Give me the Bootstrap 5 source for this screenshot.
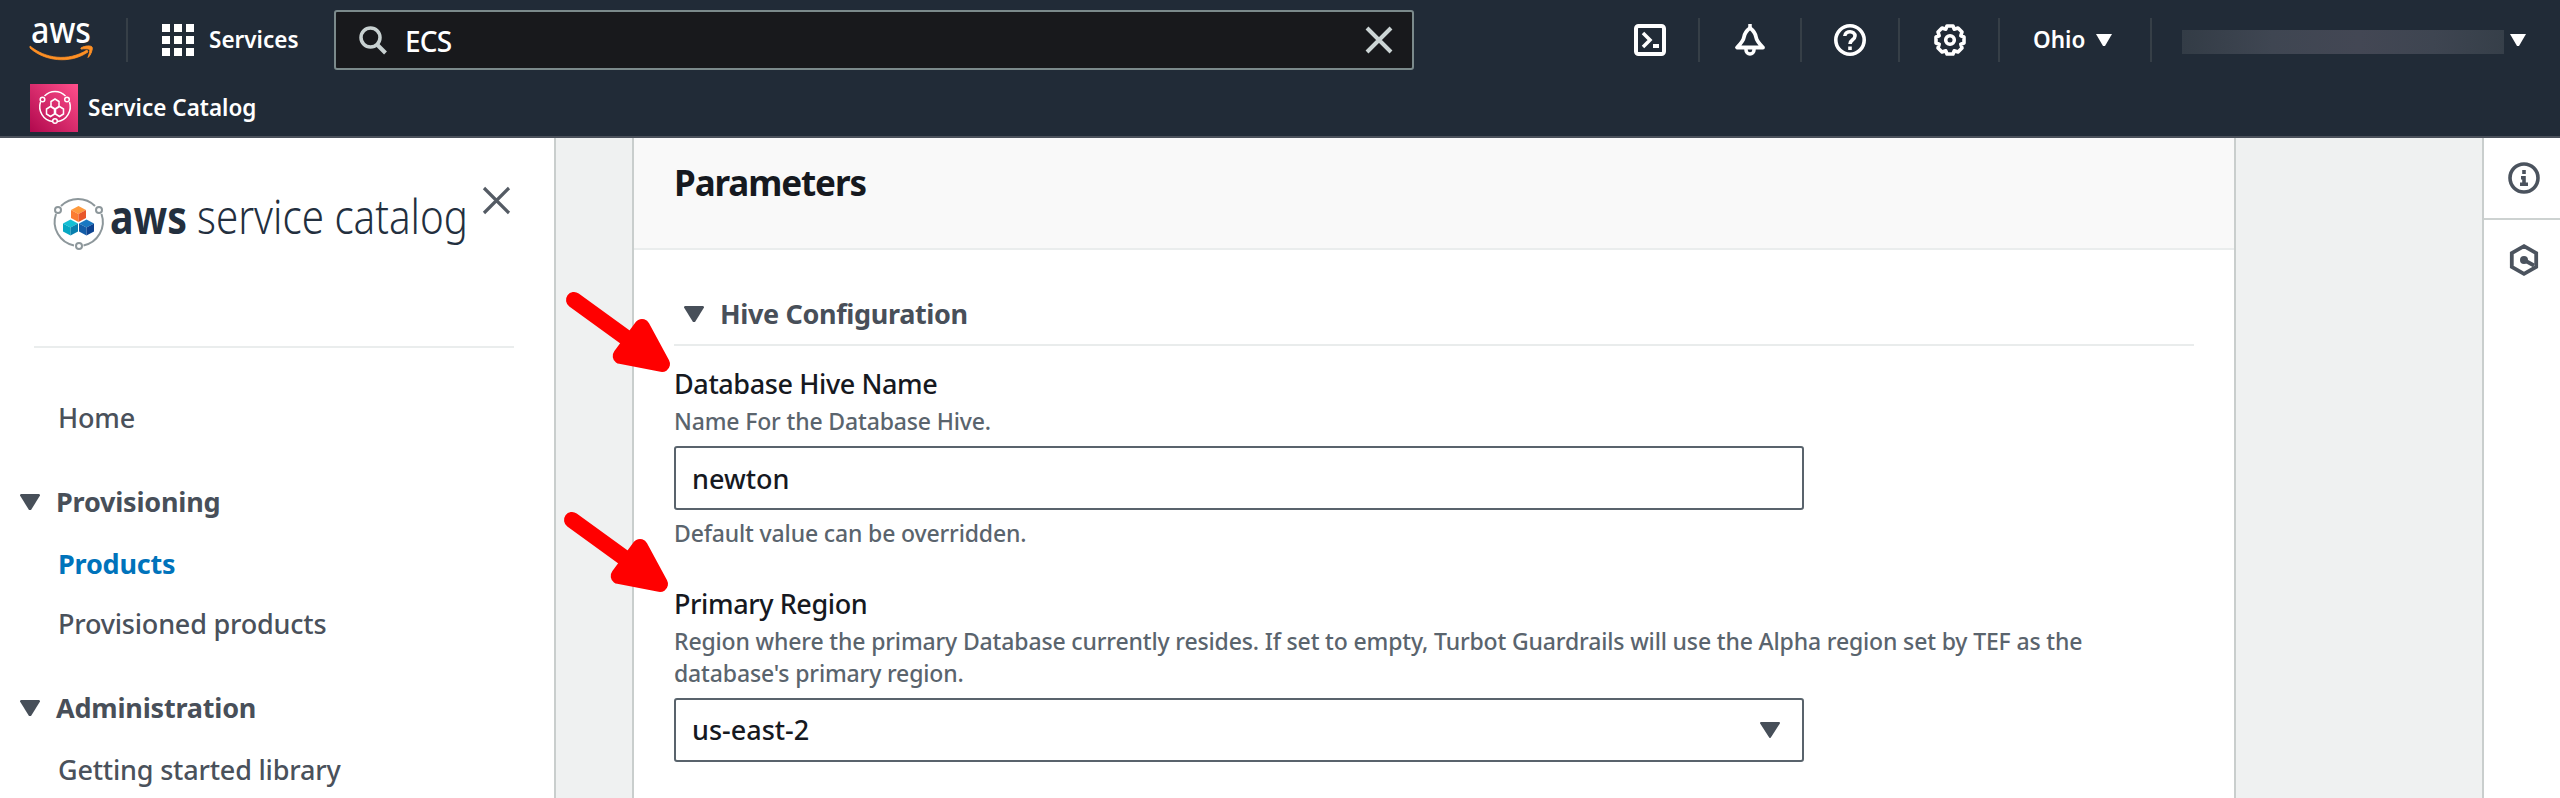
<!DOCTYPE html>
<html lang="en">
<head>
<meta charset="utf-8">
<meta name="viewport" content="width=device-width, initial-scale=1">
<title>Service Catalog</title>
<link href="https://cdn.jsdelivr.net/npm/bootstrap@5.3.0/dist/css/bootstrap.min.css" rel="stylesheet">
<style>
body{font-family:"Noto Sans","Open Sans",sans-serif;font-size:27px;font-weight:500;letter-spacing:-.2px;line-height:36px;color:#16191f;background:#fff}
svg{display:block;flex:none;overflow:visible}
.shell{height:798px}
.topbar{height:138px;background:#212b37;border-bottom:2px solid #4b515b;color:#fff}
.toprow{height:80px}
.vline{width:2px;height:44px;background:#363f47}
.topbar-text{font-size:22.5px;font-weight:600;letter-spacing:0;line-height:30px}
.search{width:1080px;height:60px;background:#18191c;border:2px solid #7b8a8b;border-radius:3px;padding:0 19px 0 22px}
.search input{font-size:28px;font-weight:550;letter-spacing:-.8px;padding:2px 0 0;color:#fff!important;margin-left:17px}
.slot{width:100px}
.redacted{width:322px;height:24px;background:linear-gradient(90deg,#333c46,#3f4652 28%,#434754 55%,#3e4551 78%,#363f49)}
.side{width:556px;border-right:2px solid #c9cecd;color:#4a515b}
.side a{color:inherit;text-decoration:none;display:block;padding-left:58px}
.side .current{color:#0073bb;font-weight:700}
.side-rule{height:2px;background:#eaeded;margin:0 40px 0 34px}
.group-title{font-weight:700;color:#484f59}
.canvas{background:#eff1f1;padding-left:76px}
.panel{width:1604px;background:#fff;border:solid #c9cecd;border-width:0 2px}
.panel-top{height:112px;background:#f9f9f9;border-bottom:2px solid #eaeded;padding:21px 40px 0 40px}
.panel-top h1{font-size:35px;font-weight:700;line-height:48px;letter-spacing:-1.1px;margin:0}
.panel-main{padding:46px 40px 0 40px}
.section-title{padding:0 0 12px 10px;border-bottom:2px solid #e9ecec;margin-bottom:22px;gap:16px;letter-spacing:-.35px}
.field-label{line-height:32px;letter-spacing:-.4px;margin:0 0 5px;display:block}
.hint{font-size:23px;font-weight:530;line-height:32px;letter-spacing:-.15px;color:#5a646d;margin:0}
.field{width:1130px;height:64px;border:2px solid #59636c!important;border-radius:3px;padding:1px 16px 0;margin:9px 0 7px;font-size:27px;font-weight:500;letter-spacing:0;color:#16191f;background-color:#fff}
select.field{padding-top:0;background:#fff url("data:image/svg+xml,%3Csvg xmlns='http://www.w3.org/2000/svg' viewBox='0 0 20 16'%3E%3Cpath fill='%23474f59' stroke='%23474f59' stroke-width='2' stroke-linejoin='round' d='M1 1h18L10 15z'/%3E%3C/svg%3E") no-repeat right 22px center/20px 16px}
.tools{width:78px;border-left:2px solid #c9cecd}
.tool{height:82px;border-bottom:2px solid #cdd2d1}
.pointer{position:absolute;left:560px;width:120px;height:90px}
</style>
</head>
<body class="overflow-hidden">
<div class="shell d-flex flex-column position-relative">
<header class="topbar flex-shrink-0">
  <div class="toprow d-flex align-items-center">
    <svg width="66" height="44" viewBox="0 0 66 44" style="margin-left:29px">
      <text x="2" y="25" font-size="37" font-weight="550" letter-spacing="0" textLength="60" lengthAdjust="spacingAndGlyphs" fill="#fff">aws</text>
      <path d="M1 28c15 12.500 38 16 57 4l1 2C41 46.500 15 43 1 30z" fill="#ff9024" stroke="#ff9024" stroke-width=".8"/><path d="M52 30c4-2.500 10-2.500 11-1s-1 8-4 10.500c1-3 2.500-7 1.500-8s-5-.8-8.500-.5z" fill="#ff9024" stroke="#ff9024"/>
    </svg>
    <div class="vline" style="margin-left:31px"></div>
    <svg width="32" height="32" viewBox="0 0 32 32" fill="#fff" style="margin-left:34px"><path d="M0 0h8v8H0zM12 0h8v8h-8zM24 0h8v8h-8zM0 12h8v8H0zM12 12h8v8h-8zM24 12h8v8h-8zM0 24h8v8H0zM12 24h8v8h-8zM24 24h8v8h-8z"/></svg>
    <span class="topbar-text" style="margin-left:15px;width:125px">Services</span>
    <div class="search d-flex align-items-center">
      <svg width="30" height="30" viewBox="0 0 30 30" fill="none" stroke="#c8d1d1" stroke-width="3.500"><circle cx="12.500" cy="12.500" r="9.500"/><path d="M19 19.500l8.500 8.500" stroke-width="4"/></svg>
      <input class="form-control border-0 bg-transparent shadow-none" value="ECS" aria-label="Search">
      <svg width="28" height="28" viewBox="0 0 28 28" stroke="#ccd5d5" stroke-width="4"><path d="M2 2l24 24M26 2L2 26"/></svg>
    </div>
    <div class="d-flex align-items-center" style="margin-left:186px">
      <div class="slot d-flex justify-content-center"><svg width="32" height="32" viewBox="0 0 32 32" fill="none" stroke="#fff" stroke-width="4"><rect x="2" y="2" width="28" height="28" rx="2.500"/><path d="M9 9l7 7-7 7" stroke-width="3.500"/><path d="M19 22h6"/></svg></div>
      <div class="vline" style="margin-left:-2px"></div>
      <div class="slot d-flex justify-content-center"><svg width="32" height="32" viewBox="0 0 32 32" fill="none" stroke="#fff" stroke-width="3.800" stroke-linejoin="round"><path d="M16 4c-4 3-5.500 6-6 9-.6 4-3.500 7-7 10.500h26c-3.500-3.500-6.400-6.500-7-10.500-.5-3-2-6-6-9z"/><path d="M12 24v2a4 4 0 0 0 8 0v-2M16 0v5" stroke-width="3.500"/></svg></div>
      <div class="vline"></div>
      <div class="slot d-flex justify-content-center" style="margin-left:-2px"><svg width="32" height="32" viewBox="0 0 32 32" fill="none" stroke="#fff" stroke-width="3.600"><circle cx="16" cy="16" r="14.200"/><path d="M10.800 12c.4-6 10.400-5.500 10.200 0-.1 4-5 3.500-5 8M16 22.500v3.500"/></svg></div>
      <div class="vline" style="margin-left:-2px"></div>
      <div class="slot d-flex justify-content-center"><svg width="32" height="32" viewBox="0 0 32 32" fill="none" stroke="#fff" stroke-width="3.600" stroke-linejoin="round"><path d="M13 2h6l1.200 3.200L24 4l4 4-1.200 3.800L30 13v6l-3.200 1.200L28 24l-4 4-3.800-1.200L19 30h-6l-1.200-3.200L8 28l-4-4 1.200-3.800L2 19v-6l3.200-1.200L4 8l4-4 3.800 1.200z"/><circle cx="16" cy="16" r="4.300"/></svg></div>
      <div class="vline" style="margin-left:-2px"></div>
    </div>
    <span class="topbar-text" style="margin-left:33px">Ohio</span>
    <svg width="16" height="12" viewBox="0 0 16 12" fill="#fff" style="margin-left:11px"><path d="M0 0h16L9 12H7z"/></svg>
    <div class="vline ms-auto"></div>
    <div class="redacted" style="margin:4px 6px 0 30px"></div>
    <svg width="16" height="12" viewBox="0 0 16 12" fill="#fff" style="margin-right:34px"><path d="M0 0h16L9 12H7z"/></svg>
  </div>
  <div class="d-flex align-items-center" style="padding:4px 0 0 30px">
    <svg width="48" height="48" viewBox="0 0 48 48">
      <defs><linearGradient id="pink" x1="0" y1="1" x2="1" y2="0"><stop offset="0" stop-color="#b0084d"/><stop offset="1" stop-color="#ff4f8b"/></linearGradient></defs>
      <path fill="url(#pink)" d="M0 0h48v48H0z"/>
      <g fill="none" stroke="#fff" stroke-width="1.500"><path d="M14.500 12a14.500 14.500 0 0 1 21 0M39.500 18a15 15 0 0 1-12 19.500M10.500 18a15 15 0 0 0 12 19.500"/><circle cx="12.500" cy="15.500" r="2.300"/><circle cx="37" cy="15.500" r="2.300"/><circle cx="25" cy="37" r="2.300"/><path d="M25 15l4 2.500v5L25 25l-4-2.500v-5zM20.500 22.500l4 2.500v5l-4 2.500-4-2.500v-5zM29.500 22.500l4 2.500v5l-4 2.500-4-2.500v-5z"/></g>
    </svg>
    <span class="topbar-text" style="margin-left:10px">Service Catalog</span>
  </div>
</header>
<div class="d-flex flex-grow-1 overflow-hidden">
  <nav class="side flex-shrink-0">
    <div class="d-flex align-items-start" style="padding:46px 42px 0 53px;height:208px">
      <svg width="416" height="74" viewBox="53 184 416 74" style="margin-right:12px">
        <g fill="none" stroke="#8d979b" stroke-width="2"><path d="M61 206a24 24 0 0 1 34 0M101.500 214a24 24 0 0 1-18 31.500M56 214a24 24 0 0 0 18 31.500"/><circle cx="58" cy="210" r="3"/><circle cx="99" cy="210" r="3"/><circle cx="79" cy="246" r="3"/></g>
        <path d="M78.500 206l7.500 4-7.500 4-7.500-4z" fill="#ff9a3d"/><path d="M71 210l7.500 4v8l-7.500-4z" fill="#fb7c31"/><path d="M86 210l-7.500 4v8l7.500-4z" fill="#e8572a"/>
        <path d="M70.500 219.500l7.500 4-7.500 4-7.500-4z" fill="#14bfd4"/><path d="M63 223.500l7.500 4v8l-7.500-4z" fill="#06a7c2"/><path d="M78 223.500l-7.500 4v8l7.500-4z" fill="#087fae"/>
        <path d="M86.500 219.500l7.500 4-7.500 4-7.500-4z" fill="#1878c2"/><path d="M79 223.500l7.500 4v8l-7.500-4z" fill="#135da8"/><path d="M94 223.500l-7.500 4v8l7.500-4z" fill="#0d4390"/>
        <text x="110" y="234" font-size="47" font-weight="700" letter-spacing="0" textLength="77" lengthAdjust="spacingAndGlyphs" fill="#232f3e">aws</text>
        <text x="197" y="234" font-size="47" font-weight="300" letter-spacing="0" textLength="271" lengthAdjust="spacingAndGlyphs" fill="#232f3e">service catalog</text>
      </svg>
      <svg width="30" height="30" viewBox="0 0 30 30" stroke="#545b64" stroke-width="3.200" style="margin-top:1px"><path d="M3 3l25 25M28 3L3 28"/></svg>
    </div>
    <div class="side-rule"></div>
    <a href="#" style="margin-top:52px">Home</a>
    <div class="group-title d-flex align-items-center" style="margin:48px 0 26px 20px;gap:16px"><svg width="20" height="16" viewBox="0 0 20 16" fill="#474f59"><path d="M1 0h18q1 0 1 1.500L11 16H9L0 1.500Q0 0 1 0z"/></svg>Provisioning</div>
    <a href="#" class="current">Products</a>
    <a href="#" style="margin-top:24px">Provisioned products</a>
    <div class="group-title d-flex align-items-center" style="margin:48px 0 26px 20px;gap:16px"><svg width="20" height="16" viewBox="0 0 20 16" fill="#474f59"><path d="M1 0h18q1 0 1 1.500L11 16H9L0 1.500Q0 0 1 0z"/></svg>Administration</div>
    <a href="#">Getting started library</a>
  </nav>
  <main class="canvas flex-grow-1 d-flex">
    <section class="panel">
      <div class="panel-top"><h1>Parameters</h1></div>
      <div class="panel-main">
        <div class="section-title group-title d-flex align-items-center"><svg width="20" height="16" viewBox="0 0 20 16" fill="#474f59"><path d="M1 0h18q1 0 1 1.500L11 16H9L0 1.500Q0 0 1 0z"/></svg>Hive Configuration</div>
        <label class="field-label" for="hive">Database Hive Name</label>
        <p class="hint">Name For the Database Hive.</p>
        <input id="hive" class="form-control field" value="newton">
        <p class="hint">Default value can be overridden.</p>
        <label class="field-label" for="region" style="margin-top:39px">Primary Region</label>
        <p class="hint">Region where the primary Database currently resides. If set to empty, Turbot Guardrails will use the Alpha region set by TEF as the<br>database's primary region.</p>
        <select id="region" class="form-select field"><option>us-east-2</option></select>
      </div>
    </section>
  </main>
  <aside class="tools bg-white flex-shrink-0">
    <div class="tool d-flex justify-content-center align-items-center"><svg width="32" height="32" viewBox="0 0 32 32" fill="none" stroke="#4b535e" stroke-width="3.600" style="margin-left:4px"><circle cx="16" cy="16" r="14"/><path d="M16 8v4M13 15.800h3V22M12 22.200h8"/></svg></div>
    <div class="d-flex justify-content-center" style="padding-top:24px"><svg width="32" height="32" viewBox="0 0 32 32" fill="none" stroke="#4b535e" stroke-width="3.800" style="margin-left:4px"><path d="M16 2.200l12.200 7v13.600L16 29.800l-12.200-7V9.200z"/><circle cx="16" cy="16" r="4" fill="#4b535e" stroke="none"/><path d="M16 16l10 5.500"/></svg></div>
  </aside>
</div>
<svg class="pointer" style="top:285px" viewBox="560 285 120 90" fill="red" stroke="red" stroke-width="16" stroke-linecap="round" stroke-linejoin="round"><path d="M574 300l60 43.500"/><path d="M642 327l-21.300 29 41.300 8z"/></svg>
<svg class="pointer" style="top:505px;left:558px" viewBox="560 285 120 90" fill="red" stroke="red" stroke-width="16" stroke-linecap="round" stroke-linejoin="round"><path d="M574 300l60 43.500"/><path d="M642 327l-21.300 29 41.300 8z"/></svg>
</div>
<script src="https://cdn.jsdelivr.net/npm/bootstrap@5.3.0/dist/js/bootstrap.bundle.min.js"></script>
</body>
</html>
